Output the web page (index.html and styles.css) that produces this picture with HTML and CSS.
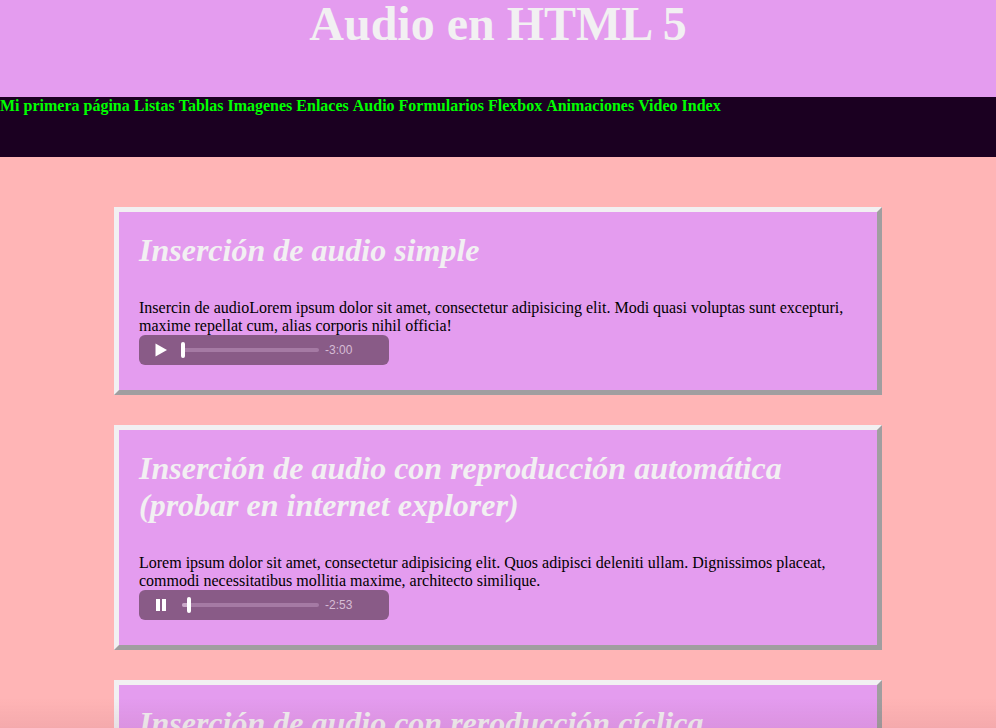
FILE: index.html
```html
<!DOCTYPE html>
<html lang="es">
<head>
<meta charset="utf-8">
<title>Audio en HTML 5</title>
<link rel="stylesheet" href="styles.css">
</head>
<body>
<header class="top">
  <h1 class="title">Audio en HTML 5</h1>
</header>
<nav class="menu">
  <a href="#">Mi primera página</a>
  <a href="#">Listas</a>
  <a href="#">Tablas</a>
  <a href="#">Imagenes</a>
  <a href="#">Enlaces</a>
  <a href="#">Audio</a>
  <a href="#">Formularios</a>
  <a href="#">Flexbox</a>
  <a href="#">Animaciones</a>
  <a href="#">Video</a>
  <a href="#">Index</a>
</nav>
<main class="content">
  <section class="card">
    <h2 class="card-title">Inserción de audio simple</h2>
    <p class="card-text">Insercin de audioLorem ipsum dolor sit amet, consectetur adipisicing elit. Modi quasi voluptas sunt excepturi, maxime repellat cum, alias corporis nihil officia!</p>
    <div class="player">
      <svg class="btn" width="14" height="14" viewBox="0 0 14 14"><path d="M1.5 0.5 L13 7 L1.5 13.5 Z" fill="#fff"/></svg>
      <div class="track"><span class="thumb thumb-start"></span></div>
      <span class="time">-3:00</span>
    </div>
  </section>
  <section class="card">
    <h2 class="card-title">Inserción de audio con reproducción automática (probar en internet explorer)</h2>
    <p class="card-text">Lorem ipsum dolor sit amet, consectetur adipisicing elit. Quos adipisci deleniti ullam. Dignissimos placeat, commodi necessitatibus mollitia maxime, architecto similique.</p>
    <div class="player">
      <svg class="btn" width="14" height="14" viewBox="0 0 14 14"><rect x="2" y="1" width="4" height="12" fill="#fff"/><rect x="8" y="1" width="4" height="12" fill="#fff"/></svg>
      <div class="track"><span class="played"></span><span class="thumb thumb-mid"></span></div>
      <span class="time">-2:53</span>
    </div>
  </section>
  <section class="card">
    <h2 class="card-title">Inserción de audio con reroducción cíclica</h2>
    <p class="card-text">Lorem ipsum dolor sit amet, consectetur adipisicing elit. Quos adipisci deleniti ullam. Dignissimos placeat, commodi necessitatibus mollitia maxime.</p>
    <div class="player">
      <svg class="btn" width="14" height="14" viewBox="0 0 14 14"><path d="M1.5 0.5 L13 7 L1.5 13.5 Z" fill="#fff"/></svg>
      <div class="track"><span class="thumb thumb-start"></span></div>
      <span class="time">-3:00</span>
    </div>
  </section>
</main>
<div class="fade"></div>
</body>
</html>
```
FILE: styles.css
```css
html, body {
  margin: 0;
  padding: 0;
}
body {
  background: #ffb5b6;
  font-family: "Liberation Serif", "Times New Roman", serif;
  font-size: 16px;
  color: #000;
}
.top {
  background: #e49cef;
  height: 97px;
}
.title {
  margin: 0;
  font-size: 48px;
  line-height: 48px;
  font-weight: bold;
  color: #f2f0f2;
  text-align: center;
}
.menu {
  background: #1b0021;
  height: 60px;
  line-height: 18px;
}
.menu a {
  color: #00ff00;
  font-weight: bold;
  text-decoration: none;
}
.content {
  padding: 20px 0 40px;
}
.card {
  box-sizing: border-box;
  width: 768px;
  margin: 30px auto 0;
  background: #e49cef;
  border: 5px solid;
  border-color: #f2f0f2 #a09ea0 #a09ea0 #f2f0f2;
  padding: 20px 20px 25px;
}
.card-title {
  margin: 0 0 27px;
  font-size: 32px;
  font-style: italic;
  font-weight: bold;
  color: #f2f0f2;
}
.card-text {
  margin: 0;
  line-height: 18px;
  padding-top: 3px;
}
.player {
  box-sizing: border-box;
  width: 250px;
  height: 30px;
  border-radius: 6px;
  background: #895b87;
  display: flex;
  align-items: center;
  padding: 0 0 0 15px;
  margin-top: 0;
}
.btn {
  flex: none;
}
.track {
  position: relative;
  width: 137px;
  height: 4px;
  border-radius: 2px;
  background: #a57aa4;
  margin-left: 14px;
}
.played {
  position: absolute;
  left: 0;
  top: 0;
  width: 8px;
  height: 4px;
  border-radius: 2px;
  background: #c9a8c8;
}
.thumb {
  position: absolute;
  top: -6px;
  width: 4px;
  height: 16px;
  border-radius: 2px;
  background: #fff;
}
.thumb-start {
  left: -1px;
}
.thumb-mid {
  left: 5px;
}
.time {
  margin-left: 6px;
  font-family: "Liberation Sans", Arial, sans-serif;
  font-size: 12px;
  color: #d6bcd5;
}
.fade {
  position: fixed;
  left: 0;
  right: 0;
  bottom: 0;
  height: 30px;
  pointer-events: none;
  background: linear-gradient(rgba(120, 40, 60, 0), rgba(120, 40, 60, 0.08));
}
```
